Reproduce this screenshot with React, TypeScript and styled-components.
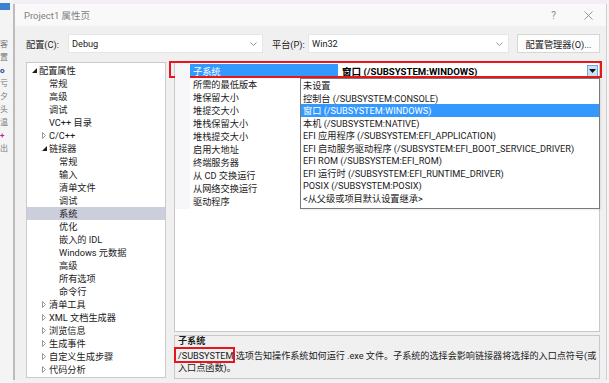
import React from 'react';
import styled, { createGlobalStyle } from 'styled-components';

const Global = createGlobalStyle`
  html, body { margin: 0; padding: 0; }
  body {
    width: 609px; height: 383px; overflow: hidden;
    background: #f3eef4;
    font-family: Roboto, "Noto Sans CJK SC", sans-serif;
    font-size: 9.2px;
    color: #1a1a1a;
  }
`;

const Screen = styled.div`
  width: 609px; height: 383px;
  display: flex;
  background: #f3eef4;
  overflow: hidden;
`;

const BackStrip = styled.div`
  width: 13px;
  flex: none;
  background: #f4f4f4;
  display: flex;
  flex-direction: column;
  overflow: hidden;
`;

const BackBlue = styled.div`
  height: 7px; width: 10px; margin-top: 3px;
  background: #3d7fd0;
`;

const BackChars = styled.div`
  display: flex; flex-direction: column;
  padding-top: 28px;
  font-size: 8px;
  line-height: 13px;
  color: #666;
`;

const BackChar = styled.span<{ $c?: string; $b?: boolean }>`
  color: ${p => p.$c || '#777'};
  font-weight: ${p => (p.$b ? 700 : 400)};
`;

const RightStrip = styled.div`
  width: 2px; flex: none; background: #f7f5f8;
`;

const Dialog = styled.div`
  flex: 1;
  margin: 4px 0 3px;
  border-left: 2px solid #bcbcbc;
  border-right: 1px solid #cfcfcf;
  display: flex;
  flex-direction: column;
  background: #f0f0f0;
`;

const TitleBar = styled.div`
  height: 22px;
  flex: none;
  background: #faf9fa;
  display: flex;
  align-items: center;
  padding-left: 9px;
  color: #7f7f7f;
  font-size: 9.5px;
`;

const TitleText = styled.span`
  flex: 1;
`;

const TitleButton = styled.span`
  width: 35px;
  display: flex;
  align-items: center;
  justify-content: center;
  color: #8a8a8a;
  font-size: 10px;
`;

const Body = styled.div`
  flex: 1;
  padding: 8px 6px 1px 11px;
  display: flex;
  flex-direction: column;
  gap: 8px;
`;

const Toolbar = styled.div`
  height: 19px;
  display: flex;
  align-items: center;
`;

const Label = styled.span<{ $w: number; $ml?: number }>`
  width: ${p => p.$w}px;
  margin-left: ${p => p.$ml || 0}px;
  flex: none;
`;

const Combo = styled.div<{ $w: number }>`
  width: ${p => p.$w}px;
  height: 19px;
  box-sizing: border-box;
  flex: none;
  background: #ffffff;
  border: 1px solid #e6e6e6;
  display: flex;
  align-items: center;
  padding: 0 5px 0 3px;
`;

const ComboText = styled.span`
  flex: 1;
`;

const Button = styled.div`
  margin-left: 8px;
  width: 83px;
  height: 19px;
  box-sizing: border-box;
  background: #fdfdfd;
  border: 1px solid #d6d6d6;
  display: flex;
  align-items: center;
  justify-content: center;
`;

const Main = styled.div`
  height: 318px;
  display: flex;
  gap: 8px;
`;

const Tree = styled.div`
  width: 140px;
  height: 316px;
  margin-top: 1px;
  box-sizing: border-box;
  background: #ffffff;
  border: 1px solid #cacaca;
  padding-top: 0.5px;
  overflow: hidden;
`;

const TreeRow = styled.div<{ $level: number; $selected?: boolean }>`
  height: 13px;
  display: flex;
  align-items: center;
  padding-left: ${p => 5 + p.$level * 10}px;
  background: ${p => (p.$selected ? '#cccedb' : 'transparent')};
  white-space: nowrap;
`;

const ArrowSlot = styled.span`
  width: 7px;
  flex: none;
  display: flex;
  align-items: center;
`;

const RightCol = styled.div`
  width: 426px;
  display: flex;
  flex-direction: column;
  gap: 3px;
`;

const Grid = styled.div`
  position: relative;
  height: 271px;
  box-sizing: border-box;
  background: #ffffff;
  border: 1px solid #c8c8c8;
  padding-top: 1px;
`;

const GridRow = styled.div`
  position: relative;
  height: 13px;
  display: grid;
  grid-template-columns: 15px 148px 1fr;
  white-space: nowrap;
`;

const Gutter = styled.div`
  background: #f7f7f9;
`;

const NameCell = styled.div<{ $selected?: boolean }>`
  margin: 1px 0 1px;
  padding-left: 3px;
  display: flex;
  align-items: center;
  background: ${p => (p.$selected ? '#3399ff' : 'transparent')};
  color: ${p => (p.$selected ? '#ffffff' : '#1a1a1a')};
`;

const ValueCell = styled.div`
  display: flex;
  align-items: center;
  padding-left: 4px;
  font-weight: 700;
  font-size: 9.6px;
  color: #000;
`;

const ValueText = styled.span`
  flex: 1;
`;

const DropButton = styled.div`
  width: 11px;
  height: 12px;
  margin-right: 1px;
  margin-top: -1px;
  box-sizing: border-box;
  background: #c9e0f7;
  border: 1px solid #6fa6dc;
  display: flex;
  align-items: center;
  justify-content: center;
`;

const RedMark = styled.div`
  position: absolute;
  left: -6px;
  right: -3px;
  top: -2px;
  bottom: -2px;
  border: 2px solid #e8151d;
  pointer-events: none;
`;

const DropList = styled.div`
  position: absolute;
  left: 125px;
  top: 16px;
  width: 300px;
  height: 131px;
  box-sizing: border-box;
  background: #ffffff;
  border: 1px solid #7a7a7a;
  box-shadow: 1px 1px 2px rgba(0,0,0,0.08);
`;

const ListItem = styled.div<{ $active?: boolean }>`
  height: 12.5px;
  padding-left: 2px;
  display: flex;
  align-items: center;
  white-space: nowrap;
  background: ${p => (p.$active ? '#3399ff' : 'transparent')};
  color: ${p => (p.$active ? '#ffffff' : '#1a1a1a')};
`;

const Desc = styled.div`
  height: 44px;
  box-sizing: border-box;
  border: 1px solid #c8c8c8;
  background: #f0f0f0;
  padding: 0 0 0 3px;
  font-size: 9.1px;
`;

const DescTitle = styled.div`
  font-weight: 700;
  line-height: 11.5px;
  margin-bottom: 3.5px;
`;

const DescText = styled.div`
  line-height: 11.6px;
  white-space: nowrap;
`;

const Boxed = styled.span`
  position: relative;
  &::after {
    content: '';
    position: absolute;
    left: -4px;
    right: -2px;
    top: -4px;
    bottom: -2px;
    border: 2px solid #e8151d;
  }
`;

const Chevron = () => (
  <svg width="7" height="4" viewBox="0 0 7 4">
    <polyline points="0.5,0.5 3.5,3.5 6.5,0.5" fill="none" stroke="#8a8a8a" strokeWidth="0.9" />
  </svg>
);

const CloseIcon = () => (
  <svg width="9" height="9" viewBox="0 0 9 9">
    <path d="M0.5 0.5 L8.5 8.5 M8.5 0.5 L0.5 8.5" stroke="#8a8a8a" strokeWidth="0.9" />
  </svg>
);

const OpenArrow = () => (
  <svg width="5" height="5" viewBox="0 0 5 5">
    <polygon points="5,0 5,5 0,5" fill="#1e1e1e" />
  </svg>
);

const ClosedArrow = () => (
  <svg width="4" height="7" viewBox="0 0 4 7">
    <polygon points="0.5,0.5 3.5,3.5 0.5,6.5" fill="none" stroke="#808080" strokeWidth="0.8" />
  </svg>
);

const DownTri = () => (
  <svg width="7" height="4" viewBox="0 0 7 4">
    <polygon points="0,0 7,0 3.5,4" fill="#111" />
  </svg>
);

type TreeItem = { label: string; level: number; arrow?: 'open' | 'closed'; selected?: boolean };

const treeItems: TreeItem[] = [
  { label: '配置属性', level: 0, arrow: 'open' },
  { label: '常规', level: 1 },
  { label: '高级', level: 1 },
  { label: '调试', level: 1 },
  { label: 'VC++ 目录', level: 1 },
  { label: 'C/C++', level: 1, arrow: 'closed' },
  { label: '链接器', level: 1, arrow: 'open' },
  { label: '常规', level: 2 },
  { label: '输入', level: 2 },
  { label: '清单文件', level: 2 },
  { label: '调试', level: 2 },
  { label: '系统', level: 2, selected: true },
  { label: '优化', level: 2 },
  { label: '嵌入的 IDL', level: 2 },
  { label: 'Windows 元数据', level: 2 },
  { label: '高级', level: 2 },
  { label: '所有选项', level: 2 },
  { label: '命令行', level: 2 },
  { label: '清单工具', level: 1, arrow: 'closed' },
  { label: 'XML 文档生成器', level: 1, arrow: 'closed' },
  { label: '浏览信息', level: 1, arrow: 'closed' },
  { label: '生成事件', level: 1, arrow: 'closed' },
  { label: '自定义生成步骤', level: 1, arrow: 'closed' },
  { label: '代码分析', level: 1, arrow: 'closed' },
];

const props = [
  '子系统',
  '所需的最低版本',
  '堆保留大小',
  '堆提交大小',
  '堆栈保留大小',
  '堆栈提交大小',
  '启用大地址',
  '终端服务器',
  '从 CD 交换运行',
  '从网络交换运行',
  '驱动程序',
];

const options = [
  '未设置',
  '控制台 (/SUBSYSTEM:CONSOLE)',
  '窗口 (/SUBSYSTEM:WINDOWS)',
  '本机 (/SUBSYSTEM:NATIVE)',
  'EFI 应用程序 (/SUBSYSTEM:EFI_APPLICATION)',
  'EFI 启动服务驱动程序 (/SUBSYSTEM:EFI_BOOT_SERVICE_DRIVER)',
  'EFI ROM (/SUBSYSTEM:EFI_ROM)',
  'EFI 运行时 (/SUBSYSTEM:EFI_RUNTIME_DRIVER)',
  'POSIX (/SUBSYSTEM:POSIX)',
  '<从父级或项目默认设置继承>',
];

export default function App() {
  return (
    <>
      <Global />
      <Screen>
        <BackStrip>
          <BackBlue />
          <BackChars>
            <BackChar>客</BackChar>
            <BackChar>置</BackChar>
            <BackChar $c="#1f3f8f" $b>o</BackChar>
            <BackChar>亏</BackChar>
            <BackChar>夕</BackChar>
            <BackChar>头</BackChar>
            <BackChar>温</BackChar>
            <BackChar $c="#c0209a" $b>+</BackChar>
            <BackChar>出</BackChar>
          </BackChars>
        </BackStrip>
        <Dialog>
          <TitleBar>
            <TitleText>Project1 属性页</TitleText>
            <TitleButton>?</TitleButton>
            <TitleButton><CloseIcon /></TitleButton>
          </TitleBar>
          <Body>
            <Toolbar>
              <Label $w={42}>配置(C):</Label>
              <Combo $w={195}>
                <ComboText>Debug</ComboText>
                <Chevron />
              </Combo>
              <Label $w={36} $ml={9}>平台(P):</Label>
              <Combo $w={201}>
                <ComboText>Win32</ComboText>
                <Chevron />
              </Combo>
              <Button>配置管理器(O)...</Button>
            </Toolbar>
            <Main>
              <Tree>
                {treeItems.map((t, i) => (
                  <TreeRow key={i} $level={t.level} $selected={t.selected}>
                    <ArrowSlot>
                      {t.arrow === 'open' && <OpenArrow />}
                      {t.arrow === 'closed' && <ClosedArrow />}
                    </ArrowSlot>
                    {t.label}
                  </TreeRow>
                ))}
              </Tree>
              <RightCol>
                <Grid>
                  {props.map((p, i) => (
                    <GridRow key={i}>
                      <Gutter />
                      <NameCell $selected={i === 0}>{p}</NameCell>
                      {i === 0 ? (
                        <ValueCell>
                          <ValueText>窗口 (/SUBSYSTEM:WINDOWS)</ValueText>
                          <DropButton><DownTri /></DropButton>
                        </ValueCell>
                      ) : (
                        <ValueCell />
                      )}
                      {i === 0 && <RedMark />}
                    </GridRow>
                  ))}
                  <DropList>
                    {options.map((o, i) => (
                      <ListItem key={i} $active={i === 2}>{o}</ListItem>
                    ))}
                  </DropList>
                </Grid>
                <Desc>
                  <DescTitle>子系统</DescTitle>
                  <DescText>
                    <Boxed>/SUBSYSTEM</Boxed> 选项告知操作系统如何运行 .exe 文件。子系统的选择会影响链接器将选择的入口点符号(或
                  </DescText>
                  <DescText>入口点函数)。</DescText>
                </Desc>
              </RightCol>
            </Main>
          </Body>
        </Dialog>
        <RightStrip />
      </Screen>
    </>
  );
}
